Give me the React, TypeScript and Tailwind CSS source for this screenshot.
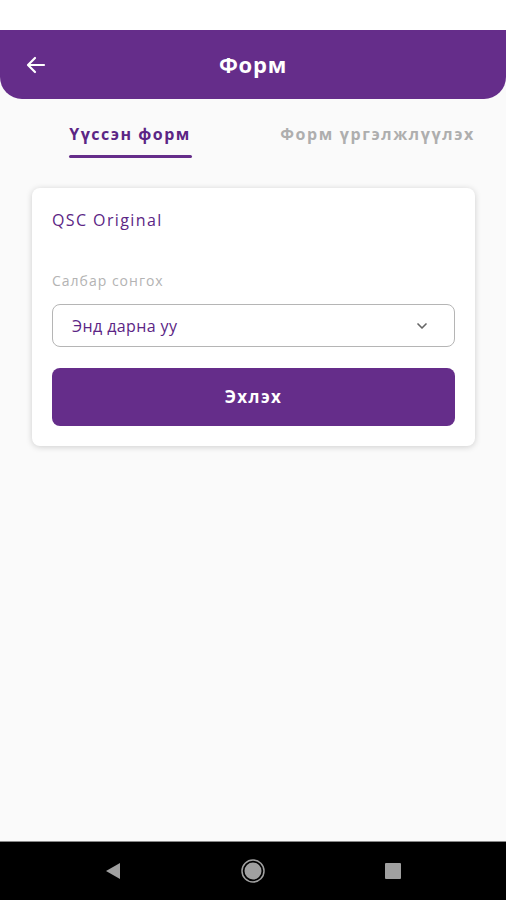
import React from 'react';

const App: React.FC = () => {
  return (
    <div
      className="w-[506px] h-[900px] flex flex-col bg-[#fafafa]"
      style={{ fontFamily: '"Open Sans", "Noto Sans", sans-serif' }}
    >
      {/* Status bar */}
      <div className="h-[30px] bg-white shrink-0" />

      {/* Header */}
      <div className="h-[69px] shrink-0 bg-[#652d8a] rounded-b-[22px] flex items-center relative">
        <button className="absolute left-[22px] w-[28px] h-[28px] flex items-center justify-center text-white">
          <svg width="24" height="24" viewBox="0 0 24 24" fill="none" stroke="currentColor" strokeWidth="2.2" strokeLinecap="round" strokeLinejoin="round">
            <path d="M20 12H5" />
            <path d="M11 5l-7 7 7 7" />
          </svg>
        </button>
        <h1 className="flex-1 text-center text-white text-[22px] font-bold tracking-[0.8px]">Форм</h1>
      </div>

      {/* Tabs */}
      <div className="flex pt-[23px] shrink-0">
        <div className="w-[260px] flex justify-center">
          <div className="flex flex-col items-center">
            <span className="text-[16px] font-bold text-[#5b2585] leading-[24px] tracking-[1.5px]">Үүссэн форм</span>
            <div className="mt-[9px] h-[3px] w-[123px] bg-[#652d8a] rounded-full" />
          </div>
        </div>
        <div className="flex-1 flex justify-center">
          <span className="text-[16px] font-bold text-[#aeaeae] leading-[24px] tracking-[1.6px] pr-[11px]">Форм үргэлжлүүлэх</span>
        </div>
      </div>

      {/* Card */}
      <div className="mx-[32px] mt-[30px] w-[443px] bg-white rounded-[8px] shadow-[0_1px_6px_rgba(0,0,0,0.18)] px-[20px] pt-[20px] pb-[20px] flex flex-col">
        <div className="text-[16px] text-[#5b2585] leading-[24px] tracking-[1.4px]">QSC Original</div>
        <div className="mt-[39px] text-[14px] text-[#b3b3b3] leading-[20px] tracking-[1px]">Салбар сонгох</div>
        <div className="mt-[13px] h-[43px] border border-[#b5b5b5] rounded-[8px] flex items-center justify-between pl-[19px] pr-[24px]">
          <span className="text-[16px] text-[#5b2585] tracking-[0.4px]">Энд дарна уу</span>
          <svg width="16" height="16" viewBox="0 0 24 24" fill="none" stroke="#666" strokeWidth="2.5" strokeLinecap="round" strokeLinejoin="round">
            <path d="M6 9l6 6 6-6" />
          </svg>
        </div>
        <button className="mt-[21px] h-[58px] bg-[#652d8a] rounded-[8px] text-white text-[17px] font-bold tracking-[1.4px]">
          Эхлэх
        </button>
      </div>

      <div className="flex-1" />

      {/* Android nav bar */}
      <div className="h-[59px] shrink-0 bg-black flex items-center justify-center border-t border-[#888]">
        <div className="flex items-center gap-[100px]">
          <div className="w-[40px] flex justify-center">
            <svg width="16" height="18" viewBox="0 0 16 18">
              <path d="M15 1L1 9l14 8z" fill="#a0a0a0" />
            </svg>
          </div>
          <div className="w-[40px] flex justify-center">
            <svg width="26" height="26" viewBox="0 0 26 26">
              <circle cx="13" cy="13" r="11" fill="none" stroke="#a0a0a0" strokeWidth="1.5" />
              <circle cx="13" cy="13" r="8.5" fill="#a0a0a0" />
            </svg>
          </div>
          <div className="w-[40px] flex justify-center">
            <div className="w-[16px] h-[16px] bg-[#a0a0a0] rounded-[1px]" />
          </div>
        </div>
      </div>
    </div>
  );
};

export default App;
